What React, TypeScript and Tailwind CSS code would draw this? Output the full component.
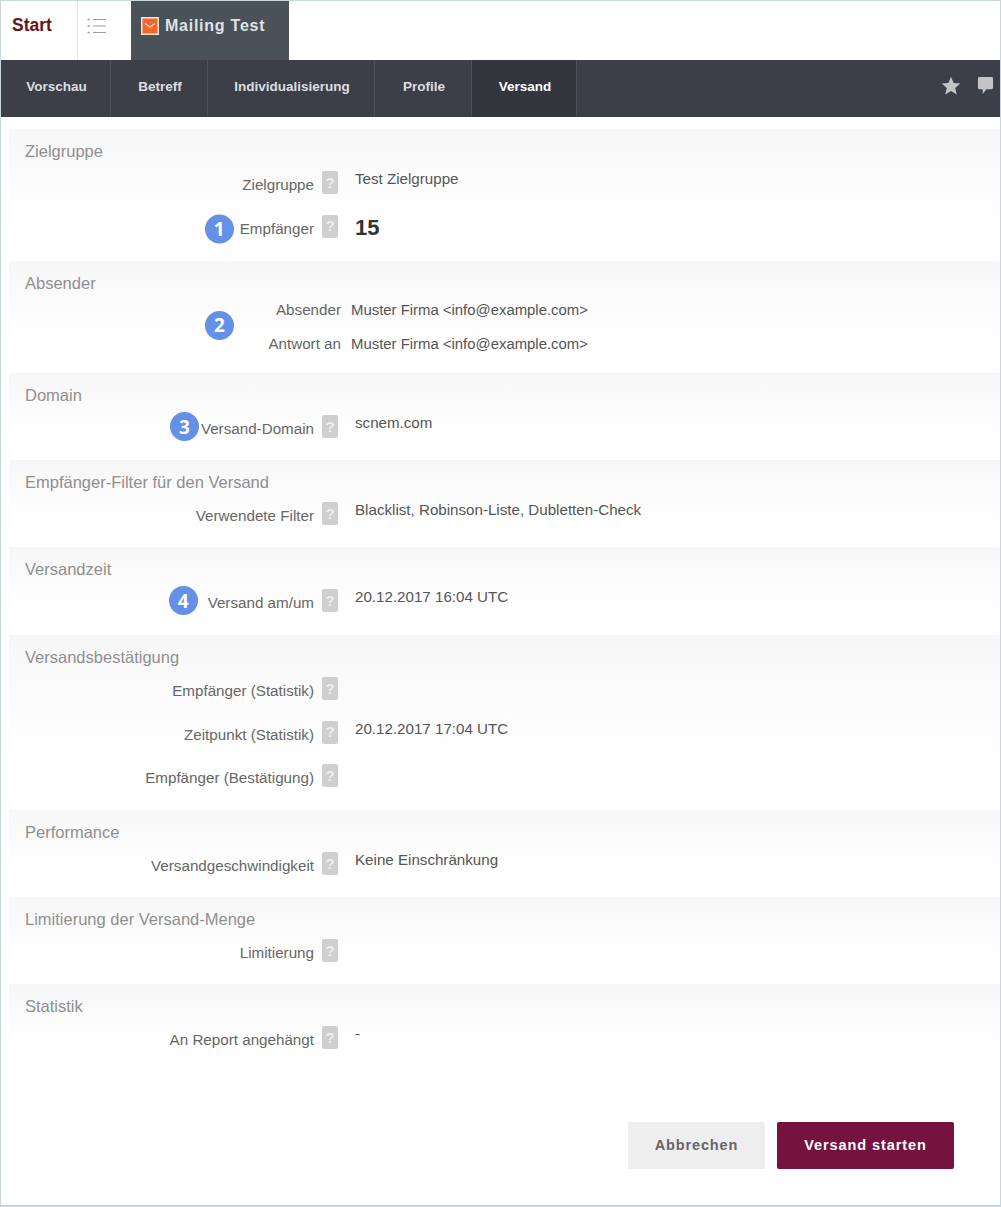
const FONT = "font-['Liberation_Sans',Arial,sans-serif]";

function Help() {
  return (
    <span className="ml-[8px] flex h-[23px] w-[16px] shrink-0 items-center justify-center rounded-[2px] bg-[#cfcfcf] text-[15px] font-bold text-[#eeeeee]">
      ?
    </span>
  );
}

function Badge({ n, className = "" }: { n: number; className?: string }) {
  return (
    <span className={`flex h-[29px] w-[29px] shrink-0 items-center justify-center rounded-full bg-[#6490e8] font-['Open_Sans',sans-serif] text-[19px] font-bold text-white ${className}`}>
      {n}
    </span>
  );
}

function Row({ label, value, badge, badgeGap, big }: { label: string; value?: string; badge?: number; badgeGap?: string; big?: boolean }) {
  return (
    <div className="flex h-[43.5px] items-center">
      <div className="flex w-[329px] items-center justify-end">
        {badge ? <Badge n={badge} className={badgeGap} /> : null}
        <span className="translate-y-[2.5px] text-[15.2px] text-[#666666]">{label}</span>
        <Help />
      </div>
      {value ? (
        <span className={big ? "ml-[17px] translate-y-[0.5px] text-[22px] font-bold text-[#333333]" : "ml-[17px] -translate-y-[3.5px] text-[15.15px] text-[#555555]"}>
          {value}
        </span>
      ) : null}
    </div>
  );
}

function Section({ title, h, children }: { title: string; h: string; children: React.ReactNode }) {
  return (
    <section className={`relative bg-gradient-to-b from-[#f7f7f7] to-white to-70% ${h}`}>
      <h2 className="flex h-[44px] items-center pl-[16px] text-[16.5px] font-normal text-[#8f8f8f]">{title}</h2>
      <div className="-mt-[12px]">{children}</div>
    </section>
  );
}

function Absender({ label, value }: { label: string; value: string }) {
  return (
    <div className="flex h-[34px] items-center">
      <span className="w-[332px] text-right text-[15.2px] text-[#666666]">{label}</span>
      <span className="ml-[10px] text-[14.9px] text-[#555555]">{value}</span>
    </div>
  );
}

function NavItem({ w, active, children }: { w: string; active?: boolean; children: string }) {
  return (
    <div className={`flex items-center justify-center border-r border-[#4d5058] pb-[3px] pl-[2px] ${w} ${active ? "bg-[#33363d] text-white" : ""}`}>
      {children}
    </div>
  );
}

export default function App() {
  return (
    <div className={`${FONT} h-[1207px] w-[1001px] overflow-hidden border border-b-2 border-[#c9d6df] bg-white`}>
      <header className="flex h-[59px] items-stretch">
        <div className="flex w-[77px] items-center border-r border-[#e3e8ec] pb-[10px] pl-[11px] text-[17.5px] font-bold text-[#6b1416]">Start</div>
        <div className="flex w-[53px] items-center pb-[10px] pl-[9px]">
          <svg width="20" height="18" viewBox="0 0 20 18" fill="none" stroke="#9a9fa4" strokeWidth="1">
            <path d="M6 2.500h13M6 9h13M6 15.500h13" />
            <path d="M0.500 2.500h2.500M0.500 9h2.500M0.500 15.500h2.500" strokeWidth="1.500" />
          </svg>
        </div>
        <div className="flex w-[158px] items-center gap-[6px] bg-[#4a5159] pb-[10px] pl-[10px] text-[16px] font-bold tracking-[0.75px] text-[#dfe3e8]">
          <svg width="18" height="18" viewBox="0 0 18 18">
            <rect x="0.750" y="0.750" width="16.500" height="16.500" fill="#f0682d" stroke="#f6e3d8" strokeWidth="1.500" />
            <path d="M4 6.500l5 3.500 5-3.500" fill="none" stroke="#ffd9c2" strokeWidth="1.300" />
          </svg>
          Mailing Test
        </div>
      </header>
      <nav className="flex h-[57px] items-stretch bg-[#3c3f47] text-[13.5px] font-bold text-[#dcdee2]">
        <NavItem w="w-[110px]">Vorschau</NavItem>
        <NavItem w="w-[97px]">Betreff</NavItem>
        <NavItem w="w-[167px]">Individualisierung</NavItem>
        <NavItem w="w-[97px]">Profile</NavItem>
        <NavItem w="w-[105px]" active>Versand</NavItem>
        <div className="ml-auto flex items-center gap-[16px] pb-[6px] pr-[6px]">
          <svg width="20" height="19" viewBox="0 0 24 23" fill="#c4c4c4">
            <path d="M12 1l3.200 7.400 8 .7-6.100 5.300 1.900 7.900L12 18.100 5 22.300l1.900-7.900L.8 9.100l8-.7z" />
          </svg>
          <svg width="17" height="19" viewBox="0 0 18 20" fill="#c4c4c4">
            <path d="M2.500 1h13A1.500 1.500 0 0 1 17 2.500v10a1.500 1.500 0 0 1-1.500 1.500H10l-4 5v-5H2.500A1.500 1.500 0 0 1 1 12.500v-10A1.500 1.500 0 0 1 2.500 1z" />
          </svg>
        </div>
      </nav>
      <main className="pl-[8px] pt-[12px]">
        <Section title="Zielgruppe" h="h-[132px]">
          <Row label="Zielgruppe" value="Test Zielgruppe" />
          <Row label="Empfänger" value="15" big badge={1} badgeGap="mr-[6px] translate-y-[2.5px]" />
        </Section>
        <Section title="Absender" h="h-[112px]">
          <Badge n={2} className="absolute left-[196px] top-[50px]" />
          <div className="-mt-[6px]">
            <Absender label="Absender" value="Muster Firma <info@example.com>" />
            <Absender label="Antwort an" value="Muster Firma <info@example.com>" />
          </div>
        </Section>
        <Section title="Domain" h="h-[87px]">
          <Row label="Versand-Domain" value="scnem.com" badge={3} badgeGap="mr-[2px]" />
        </Section>
        <Section title="Empfänger-Filter für den Versand" h="h-[87px]">
          <Row label="Verwendete Filter" value="Blacklist, Robinson-Liste, Dubletten-Check" />
        </Section>
        <Section title="Versandzeit" h="h-[88px]">
          <Row label="Versand am/um" value="20.12.2017 16:04 UTC" badge={4} badgeGap="mr-[10px]" />
        </Section>
        <Section title="Versandsbestätigung" h="h-[175px]">
          <Row label="Empfänger (Statistik)" />
          <Row label="Zeitpunkt (Statistik)" value="20.12.2017 17:04 UTC" />
          <Row label="Empfänger (Bestätigung)" />
        </Section>
        <Section title="Performance" h="h-[87px]">
          <Row label="Versandgeschwindigkeit" value="Keine Einschränkung" />
        </Section>
        <Section title="Limitierung der Versand-Menge" h="h-[87px]">
          <Row label="Limitierung" />
        </Section>
        <Section title="Statistik" h="h-[87px]">
          <Row label="An Report angehängt" value="-" />
        </Section>
      </main>
      <div className="mt-[51px] flex justify-end gap-[12px] pr-[46px]">
        <button className="h-[47px] w-[137px] rounded-[2px] bg-[#eeeeee] text-[14.5px] font-bold tracking-[0.85px] text-[#666666]">Abbrechen</button>
        <button className="h-[47px] w-[177px] rounded-[2px] bg-[#75123f] text-[14.5px] font-bold tracking-[0.9px] text-white">Versand starten</button>
      </div>
    </div>
  );
}
